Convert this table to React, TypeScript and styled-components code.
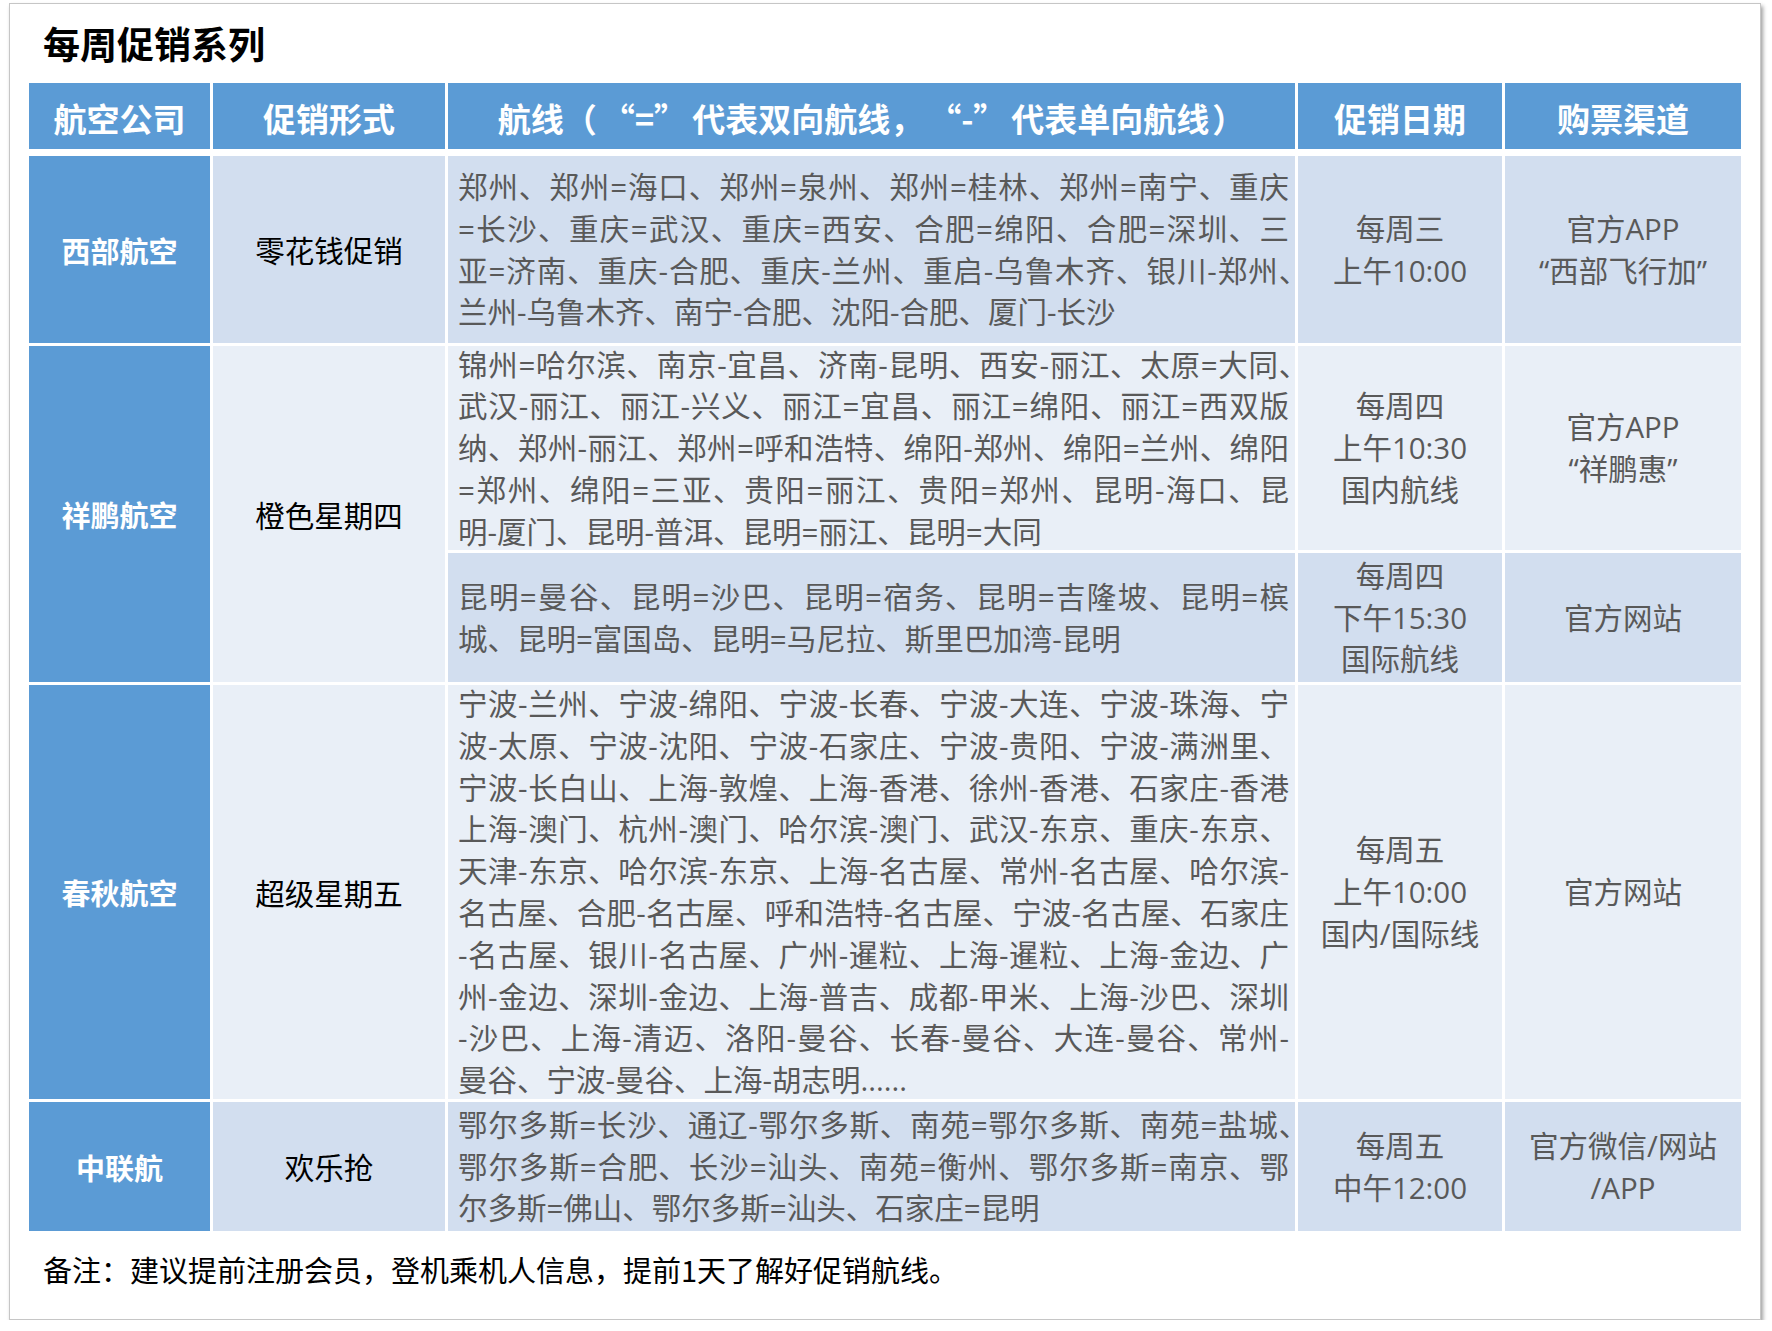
import React from "react";
import styled, { createGlobalStyle } from "styled-components";

const GlobalStyle = createGlobalStyle`
  html, body { margin: 0; padding: 0; background: #ffffff; }
  body { font-family: "Open Sans", "Noto Sans CJK SC", sans-serif; }
`;

const COLS = "181px 232px 847px 204px 236px";
const BLUE = "#5b9bd5";
const DARK = "#d2deef";
const LIGHT = "#e9eff7";

type Tone = "dark" | "light";

const Card = styled.div`
  box-sizing: border-box;
  width: 1752px;
  margin: 3px 0 0 9px;
  padding: 17px 19px 30px;
  border: 1px solid #c6c6c6;
  background: #ffffff;
  box-shadow: 2px 3px 4px rgba(0, 0, 0, 0.38);
`;

const Title = styled.h1`
  margin: 0 0 18px 14px;
  font-family: "Noto Sans CJK SC", sans-serif;
  font-size: 37px;
  font-weight: 700;
  line-height: 44px;
  color: #000;
`;

const HeaderRow = styled.div`
  display: grid;
  grid-template-columns: ${COLS};
  column-gap: 3px;
  height: 66px;
  margin-bottom: 7px;
`;

const HeaderCell = styled.div`
  display: flex;
  align-items: center;
  justify-content: center;
  padding-top: 3px;
  background: ${BLUE};
  color: #ffffff;
  font-family: "Noto Sans CJK SC", sans-serif;
  font-weight: 700;
  font-size: 33px;
  white-space: nowrap;
  text-spacing-trim: space-all;
`;

const Quote = styled.span`
  margin: 0 5px;
`;

const CloseParen = styled.span`
  margin-left: 3px;
`;

const Body = styled.div`
  display: grid;
  grid-template-columns: ${COLS};
  grid-template-rows: 187px 204px 129px 414px 129px;
  gap: 3px;
`;

const CompanyCell = styled.div<{ $span?: number }>`
  grid-row: span ${(p) => p.$span ?? 1};
  display: flex;
  align-items: center;
  justify-content: center;
  background: ${BLUE};
  color: #ffffff;
  font-family: "Noto Sans CJK SC", sans-serif;
  font-weight: 700;
  font-size: 29px;
`;

const PromoCell = styled.div<{ $tone: Tone; $span?: number }>`
  grid-row: span ${(p) => p.$span ?? 1};
  display: flex;
  align-items: center;
  justify-content: center;
  background: ${(p) => (p.$tone === "dark" ? DARK : LIGHT)};
  color: #000;
  font-size: 29.5px;
`;

const RouteCell = styled.div<{ $tone: Tone }>`
  display: flex;
  flex-direction: column;
  justify-content: center;
  min-width: 0;
  padding: 0 6px 0 10px;
  background: ${(p) => (p.$tone === "dark" ? DARK : LIGHT)};
  color: #595959;
  font-size: 29.5px;
`;

const Line = styled.div<{ $fill?: boolean; $hang?: boolean }>`
  line-height: 41.8px;
  white-space: nowrap;
  text-align: ${(p) => (p.$fill ? "justify" : "left")};
  text-align-last: ${(p) => (p.$fill ? "justify" : "auto")};
  margin-right: ${(p) => (p.$hang ? "-0.65em" : "0")};
`;

const InfoCell = styled.div<{ $tone: Tone }>`
  display: flex;
  flex-direction: column;
  align-items: center;
  justify-content: center;
  text-align: center;
  background: ${(p) => (p.$tone === "dark" ? DARK : LIGHT)};
  color: #595959;
  font-size: 29.5px;
  line-height: 41.8px;
  white-space: nowrap;
`;

const Note = styled.p`
  margin: 18px 0 0 14px;
  font-family: "Noto Sans CJK SC", sans-serif;
  font-size: 29px;
  line-height: 40px;
  color: #000;
`;

type RouteBlock = { tone: Tone; lines: string[]; hang?: number[]; date: string[]; channel: string[] };

const Routes = ({ block }: { block: RouteBlock }) => (
  <>
    <RouteCell $tone={block.tone}>
      {block.lines.map((l, i) => (
        <Line key={i} $fill={i < block.lines.length - 1} $hang={block.hang?.includes(i)}>
          {l}
        </Line>
      ))}
    </RouteCell>
    <InfoCell $tone={block.tone}>
      {block.date.map((d, i) => (
        <div key={i}>{d}</div>
      ))}
    </InfoCell>
    <InfoCell $tone={block.tone}>
      {block.channel.map((d, i) => (
        <div key={i}>{d}</div>
      ))}
    </InfoCell>
  </>
);

const xibu: RouteBlock = {
  tone: "dark",
  lines: [
    "郑州、郑州=海口、郑州=泉州、郑州=桂林、郑州=南宁、重庆",
    "=长沙、重庆=武汉、重庆=西安、合肥=绵阳、合肥=深圳、三",
    "亚=济南、重庆-合肥、重庆-兰州、重启-乌鲁木齐、银川-郑州、",
    "兰州-乌鲁木齐、南宁-合肥、沈阳-合肥、厦门-长沙",
  ],
  hang: [2],
  date: ["每周三", "上午10:00"],
  channel: ["官方APP", "“西部飞行加”"],
};

const xiangpengA: RouteBlock = {
  tone: "light",
  lines: [
    "锦州=哈尔滨、南京-宜昌、济南-昆明、西安-丽江、太原=大同、",
    "武汉-丽江、丽江-兴义、丽江=宜昌、丽江=绵阳、丽江=西双版",
    "纳、郑州-丽江、郑州=呼和浩特、绵阳-郑州、绵阳=兰州、绵阳",
    "=郑州、绵阳=三亚、贵阳=丽江、贵阳=郑州、昆明-海口、昆",
    "明-厦门、昆明-普洱、昆明=丽江、昆明=大同",
  ],
  hang: [0],
  date: ["每周四", "上午10:30", "国内航线"],
  channel: ["官方APP", "“祥鹏惠”"],
};

const xiangpengB: RouteBlock = {
  tone: "dark",
  lines: [
    "昆明=曼谷、昆明=沙巴、昆明=宿务、昆明=吉隆坡、昆明=槟",
    "城、昆明=富国岛、昆明=马尼拉、斯里巴加湾-昆明",
  ],
  date: ["每周四", "下午15:30", "国际航线"],
  channel: ["官方网站"],
};

const chunqiu: RouteBlock = {
  tone: "light",
  lines: [
    "宁波-兰州、宁波-绵阳、宁波-长春、宁波-大连、宁波-珠海、宁",
    "波-太原、宁波-沈阳、宁波-石家庄、宁波-贵阳、宁波-满洲里、",
    "宁波-长白山、上海-敦煌、上海-香港、徐州-香港、石家庄-香港",
    "上海-澳门、杭州-澳门、哈尔滨-澳门、武汉-东京、重庆-东京、",
    "天津-东京、哈尔滨-东京、上海-名古屋、常州-名古屋、哈尔滨-",
    "名古屋、合肥-名古屋、呼和浩特-名古屋、宁波-名古屋、石家庄",
    "-名古屋、银川-名古屋、广州-暹粒、上海-暹粒、上海-金边、广",
    "州-金边、深圳-金边、上海-普吉、成都-甲米、上海-沙巴、深圳",
    "-沙巴、上海-清迈、洛阳-曼谷、长春-曼谷、大连-曼谷、常州-",
    "曼谷、宁波-曼谷、上海-胡志明......",
  ],
  date: ["每周五", "上午10:00", "国内/国际线"],
  channel: ["官方网站"],
};

const zhonglian: RouteBlock = {
  tone: "dark",
  lines: [
    "鄂尔多斯=长沙、通辽-鄂尔多斯、南苑=鄂尔多斯、南苑=盐城、",
    "鄂尔多斯=合肥、长沙=汕头、南苑=衡州、鄂尔多斯=南京、鄂",
    "尔多斯=佛山、鄂尔多斯=汕头、石家庄=昆明",
  ],
  hang: [0],
  date: ["每周五", "中午12:00"],
  channel: ["官方微信/网站", "/APP"],
};

export default function App() {
  return (
    <>
      <GlobalStyle />
      <Card>
        <Title>每周促销系列</Title>
        <HeaderRow>
          <HeaderCell>航空公司</HeaderCell>
          <HeaderCell>促销形式</HeaderCell>
          <HeaderCell>
            航线（<Quote>“=”</Quote>代表双向航线，<Quote>“-”</Quote>代表单向航线<CloseParen>）</CloseParen>
          </HeaderCell>
          <HeaderCell>促销日期</HeaderCell>
          <HeaderCell>购票渠道</HeaderCell>
        </HeaderRow>
        <Body>
          <CompanyCell>西部航空</CompanyCell>
          <PromoCell $tone="dark">零花钱促销</PromoCell>
          <Routes block={xibu} />

          <CompanyCell $span={2}>祥鹏航空</CompanyCell>
          <PromoCell $tone="light" $span={2}>橙色星期四</PromoCell>
          <Routes block={xiangpengA} />
          <Routes block={xiangpengB} />

          <CompanyCell>春秋航空</CompanyCell>
          <PromoCell $tone="light">超级星期五</PromoCell>
          <Routes block={chunqiu} />

          <CompanyCell>中联航</CompanyCell>
          <PromoCell $tone="dark">欢乐抢</PromoCell>
          <Routes block={zhonglian} />
        </Body>
        <Note>备注：建议提前注册会员，登机乘机人信息，提前1天了解好促销航线。</Note>
      </Card>
    </>
  );
}
